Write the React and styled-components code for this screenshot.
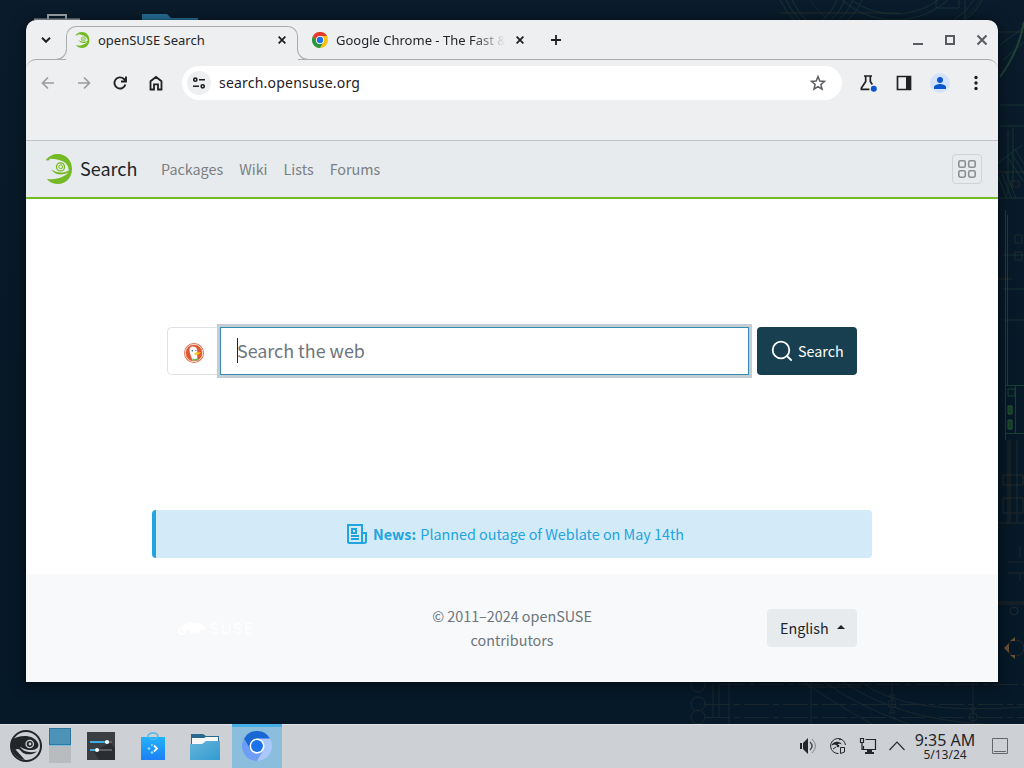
import React from "react";
import styled, { createGlobalStyle } from "styled-components";

const Global = createGlobalStyle`
  *, *::before, *::after { box-sizing: border-box; }
  html, body { margin: 0; padding: 0; overflow: hidden; }
  svg { display: block; flex: none; }
`;

const ui = `"Noto Sans", "Liberation Sans", sans-serif`;
const web = `"Noto Sans CJK SC", "Noto Sans", sans-serif`;

const Desktop = styled.div`
  position: relative;
  width: 1024px;
  height: 768px;
  overflow: hidden;
  background: linear-gradient(180deg, #0a1c2c 0%, #071927 50%, #061929 100%);
  font-family: ${ui};
  color: #232629;
  display: flex;
  flex-direction: column;
  justify-content: flex-end;
`;
const Wallpaper = styled.svg`
  position: absolute;
  inset: 0;
`;
const Window = styled.div`
  position: absolute;
  left: 26px;
  top: 20px;
  width: 972px;
  height: 662px;
  display: flex;
  flex-direction: column;
  background: #eeeff1;
  border-radius: 10px 10px 0 0;
  box-shadow: 0 2px 14px 3px rgba(0, 0, 0, 0.42), 0 0 1px #000;
  overflow: hidden;
`;

/* Tab strip */
const TabStrip = styled.div`
  height: 39px;
  flex: none;
  display: flex;
  align-items: flex-end;
  position: relative;
  z-index: 1;
`;
const StripButton = styled.div`
  width: ${(p) => p.$w}px;
  height: 39px;
  display: flex;
  align-items: center;
  justify-content: center;
`;
const Tab = styled.div`
  position: relative;
  width: ${(p) => p.$w}px;
  height: 33px;
  padding: ${(p) => p.$pad};
  display: flex;
  align-items: center;
  font-size: 13px;
  line-height: 28px;
  padding-bottom: 5px;
`;
const ActiveTab = styled(Tab)`
  &::before {
    content: "";
    position: absolute;
    inset: 0 0 9px 0;
    border: 1px solid #a9abaf;
    border-bottom: 0;
    border-radius: 10px 10px 0 0;
  }
  &::after {
    content: "";
    position: absolute;
    left: 0;
    right: 0;
    bottom: -1px;
    height: 1px;
    background: #eeeff1;
  }
`;
const Flare = styled.i`
  position: absolute;
  z-index: 1;
  bottom: -1px;
  width: 11px;
  height: 11px;
  background: #eeeff1;
  border-bottom: 1px solid #a9abaf;
  ${(p) =>
    p.$right
      ? `right: -10px; border-left: 1px solid #a9abaf; border-bottom-left-radius: 11px;`
      : `left: -10px; border-right: 1px solid #a9abaf; border-bottom-right-radius: 11px;`}
`;
const TabTitle = styled.span`
  flex: 1;
  margin-left: 8px;
  white-space: nowrap;
  ${(p) => p.$fade && `mask-image: linear-gradient(90deg, #000 80%, transparent 99%);`}
`;
const TitleGap = styled.span`
  width: 12px;
`;
const WindowButtons = styled.div`
  margin-left: auto;
  height: 39px;
  display: flex;
  align-items: center;
  gap: 20px;
  padding: 1px 10px 0 0;
`;

/* Toolbar */
const Toolbar = styled.div`
  height: 82px;
  flex: none;
  border-top: 1px solid #a9abaf;
  border-bottom: 1px solid #c1c3c6;
  border-radius: 10px 10px 0 0;
  display: flex;
  align-items: flex-start;
  padding: 6px 10px 0 10px;
`;
const ToolIcons = styled.div`
  display: flex;
  align-items: center;
  gap: 12px;
  height: 34px;
`;
const ToolIcon = styled.div`
  width: 24px;
  height: 34px;
  display: flex;
  align-items: center;
  justify-content: center;
`;
const AddressBar = styled.div`
  width: 660px;
  height: 34px;
  margin: 0 14px 0 14px;
  border-radius: 17px;
  background: #fff;
  display: flex;
  align-items: center;
  padding: 0 14px 0 5px;
  font-size: 14px;
  line-height: 34px;
  letter-spacing: 0.21px;
  color: #1f2023;
`;
const SiteChip = styled.span`
  width: 24px;
  height: 24px;
  border-radius: 50%;
  background: #eeeff1;
  display: flex;
  align-items: center;
  justify-content: center;
  margin-right: 8px;
`;
const Url = styled.span`
  flex: 1;
`;
const Avatar = styled.span`
  width: 20px;
  height: 20px;
  border-radius: 50%;
  background: #d3e3fd;
`;

/* Web page */
const Navbar = styled.nav`
  height: 58px;
  flex: none;
  background: #e7ebee;
  border-bottom: 2px solid #73ba25;
  display: flex;
  align-items: center;
  padding: 0 16px 0 20px;
  font-family: ${web};
`;
const Brand = styled.span`
  font-size: 18px;
  line-height: 30px;
  color: #212529;
  margin: -2px 24px 0 8px;
  width: 57px;
  white-space: nowrap;
`;
const NavLinks = styled.div`
  display: flex;
  gap: 16px;
  flex: 1;
  font-size: 14.35px;
  line-height: 24px;
  color: #7b7f83;
`;
const GridButton = styled.div`
  width: 30px;
  height: 30px;
  border: 1px solid #cfd3d6;
  border-radius: 4px;
  display: flex;
  align-items: center;
  justify-content: center;
`;
const Main = styled.main`
  height: 375px;
  flex: none;
  background: #fff;
  display: flex;
  flex-direction: column;
  justify-content: space-between;
  padding: 128px 126px 16px;
  font-family: ${web};
`;
const SearchForm = styled.div`
  display: flex;
  margin: 0 15px;
  height: 48px;
`;
const Engine = styled.div`
  width: 53px;
  border: 1px solid #dee2e6;
  border-right: 0;
  border-radius: 5px 0 0 5px;
  display: flex;
  align-items: center;
  justify-content: center;
  padding-top: 4px;
`;
const Field = styled.div`
  width: 529px;
  border: 1px solid #358cb2;
  box-shadow: 0 0 0 3px #c3cdd3;
  display: flex;
  align-items: center;
  padding: 0 0 2px 16px;
  font-size: 17.9px;
  line-height: 30px;
  color: #6c757d;
`;
const Caret = styled.i`
  width: 1px;
  height: 25px;
  background: #212529;
  margin-right: -1px;
`;
const SubmitButton = styled.div`
  width: 100px;
  margin-left: 8px;
  border-radius: 4px;
  background: #173f4f;
  color: #fff;
  display: flex;
  align-items: center;
  padding: 0 0 1px 14px;
  gap: 5px;
  font-size: 14.35px;
  line-height: 23px;
`;
const News = styled.div`
  height: 48px;
  border-left: 4px solid #21a4df;
  border-radius: 4px;
  background: #d3ebf9;
  color: #21a4df;
  display: flex;
  align-items: center;
  justify-content: center;
  padding-left: 3px;
  font-size: 14.35px;
  line-height: 24px;
  white-space: pre;
  b { font-weight: 700; margin: 0 1px 0 6px; }
`;
const Footer = styled.footer`
  flex: 1;
  background: #f8f9fb;
  display: flex;
  align-items: center;
  justify-content: space-between;
  padding: 0 141px 0 151px;
  font-family: ${web};
  font-size: 14.35px;
`;
const SuseBrand = styled.div`
  width: 90px;
  display: flex;
  align-items: center;
  gap: 4px;
  padding: 2px 0 0 1px;
  color: #fff;
  font-family: Inter, sans-serif;
  font-size: 14.5px;
  line-height: 16px;
  letter-spacing: 1.5px;
`;
const Copyright = styled.p`
  margin: 0 10px 0 0;
  width: 190px;
  text-align: center;
  line-height: 24px;
  color: #6c757d;
`;
const Language = styled.div`
  width: 90px;
  height: 38px;
  border-radius: 4px;
  background: #e7ebee;
  color: #212529;
  display: flex;
  align-items: center;
  gap: 8px;
  line-height: 22px;
  padding: 0 0 0 13px;
  svg { margin-top: -2px; }
`;

/* Taskbar */
const Taskbar = styled.div`
  position: relative;
  height: 44px;
  background: #cdd0d4;
  border-top: 1px solid #e0e2e4;
  display: flex;
  align-items: center;
`;
const TaskItem = styled.div`
  width: ${(p) => p.$w}px;
  height: 44px;
  display: flex;
  align-items: center;
  justify-content: center;
  margin-top: -1px;
  ${(p) => p.$active && `background: #8bbddc; border-top: 3px solid #46aee8; padding-bottom: 3px;`}
`;
const Pager = styled.div`
  width: 22px;
  height: 36px;
  display: grid;
  grid-template-rows: 17px 17px;
  gap: 1px;
  margin: -1px 3px 0 -3px;
`;
const PagerCell = styled.div`
  background: ${(p) => (p.$current ? "#4d93b8" : "#b9bcbe")};
  border: ${(p) => (p.$current ? "1px solid #2c789f" : "0")};
  box-shadow: ${(p) => (p.$current ? "0 1px 0 #7cbfe5" : "none")};
`;
const Tray = styled.div`
  margin-left: auto;
  display: flex;
  align-items: center;
  gap: 11px;
  padding: 0 16px 2px 0;
`;
const Clock = styled.div`
  width: 66px;
  margin: 1px 3px 0 -5px;
  text-align: center;
  font-size: 16px;
  line-height: 17px;
  white-space: nowrap;
  small { display: block; font-size: 12px; line-height: 12px; }
`;

const Geeko = ({ w, h }) => (
  <svg width={w} height={h} viewBox="0 0 26 30">
    <path fill="#73ba25" d="M0 5.500C3 2 7 0 12 0c8 0 14 6.500 14 15s-6 15-14 15C7.500 30 3.500 28.500.8 25c4 .5 8 .3 11.500-.7 5-1.300 9-3.800 10.300-6.800.6-4.500-1.700-8.200-6-10.200C12.500 5.400 7.500 4.300 3.300 4.800l.5 1.700-2-.6L1 7z" />
    <circle cx="14.500" cy="12.900" r="4" fill="#e7f0da" stroke="#73ba25" strokeWidth="1.300" />
    <circle cx="14.700" cy="12.700" r="1.900" fill="none" stroke="#73ba25" strokeWidth="1" />
    <path fill="#73ba25" d="M5.300 15.200c3 5.800 11.500 7.300 18 2.600v-1.300c-6 3-12.500 2.700-18-1.300z" />
  </svg>
);
const ChromeLogo = () => (
  <svg width="16" height="16" viewBox="0 0 48 48">
    <circle cx="24" cy="24" r="24" fill="#fbc116" />
    <path d="M24 12h20.800A24 24 0 0 0 3.200 12l10.400 18z" fill="#e33b2e" />
    <path d="M3.200 12 13.600 30A12 12 0 0 0 34.400 30L24 48A24 24 0 0 1 3.200 12z" fill="#279847" />
    <circle cx="24" cy="24" r="12" fill="#fff" />
    <circle cx="24" cy="24" r="9.500" fill="#1a73e8" />
  </svg>
);
const Close = ({ size = 8, color = "#202124", sw = 1.8 }) => (
  <svg width={size} height={size} viewBox="0 0 8 8">
    <path d="m.6.600 6.800 6.800m0-6.800L.6 7.400" stroke={color} strokeWidth={sw} />
  </svg>
);
const Line = ({ w = 16, h = w, vb = "0 0 16 16", color = "#202124", sw = 1.7, children }) => (
  <svg width={w} height={h} viewBox={vb} fill="none" stroke={color} strokeWidth={sw}>
    {children}
  </svg>
);

const DesktopArt = () => (
  <Wallpaper width="1024" height="768" viewBox="0 0 1024 768" fill="none">
    <path d="M34 19.500H80M48 21v-6h18v6" stroke="#a5aaae" strokeWidth="2" />
    <path d="M142 20v-6h25l4 4h27v3h-56z" fill="#26739b" />
    <g stroke="#26563d" strokeWidth="1" opacity=".42">
      <circle cx="895" cy="-60" r="74" />
      <circle cx="895" cy="-60" r="80" />
      <circle cx="895" cy="-60" r="104" opacity=".5" />
      <path d="M780 0q6 12 14 20M786 0q6 12 14 20M792 0q6 12 14 20M837 0q-5 12-14 20M845 0q-5 12-14 20M853 0q-5 12-14 20M862 0q-5 12-14 20M936 0v8h23V0M974 0q-8 12-20 20M982 0q-6 12-18 20M965 0v20M1000 45l24-18M1003 60l21-18M1000 105h24M1000 126h24M998 163l24-18M1007 156l16 25M1011 152l13 22M1015 149l9 15M998 176l9 23M1002 174l10 25M1006 172l10 27M1000 198h24M1008 130v65M1013 128v58" />
      <path d="M1024 22Q1019 51 1000 77" stroke="#3c7a43" strokeWidth="2" />
      <path d="M1003 255h21M1003 289h21M1003 320h21" />
    </g>
    <g stroke="#1e5238" opacity=".75">
      <path d="M1005.500 210v230M1007.500 215v170M1015.500 385v48M1006 385.500h18M1006 433.500h18" />
      <path d="M1008 389h7v7h-7z" />
      <path d="M1008 406h4v8h-4zM1008 420h4v9h-4z" stroke="#2f6e38" fill="#1c4a2e" />
    </g>
    <g stroke="#71502f" opacity=".28">
      <path d="M780 13h120M998 32h26M998 172h26M1011 181h8v6h-8zM998 279h14M1015 235h7v8h-7zM1015 252h7v8h-7zM1008 440v83M1010 440v83M1017 440v82M998 523h26M1003 475h20v10h-20zM1003 498h20v15h-20z" />
      <path d="M998 602h26M998 604h26M1008 562h16M1008 573h16M1020 574v7M1020 546v12" />
      <circle cx="1014" cy="611" r="4" />
      <circle cx="1016" cy="648" r="8" />
    </g>
    <path d="m1004 648 5-5v10zM1010 641l5-4v4zM1010 655l5 4v-4z" fill="#6a5136" />
    <g stroke="#5b543b" opacity=".24">
      <circle cx="698" cy="685" r="7" />
      <circle cx="698" cy="704" r="7" />
      <circle cx="698" cy="717" r="7" />
      <path d="M705 704.500h319M705 717.500h319M720 684.500h304" strokeDasharray="25 4 6 4" />
      <path d="M713 684v34M719 684v34M729 682v42M811 682v42M892 682v22M973 682v42M804 682q28 20 68 42M824 682q35 25 85 42M843 682q55 37 140 42M861 682q44 34 163 25M808 687h53" />
      <circle cx="892" cy="704" r="4" />
      <circle cx="973" cy="717" r="4" />
      <path d="m889 695 3 4 3-4zm0 18 3-4 3 4zm81-5 3 4 3-4z" />
    </g>
  </Wallpaper>
);

const Duck = () => (
  <svg width="20" height="20" viewBox="0 0 20 20">
    <circle cx="10" cy="10" r="10" fill="#de6a4b" />
    <circle cx="10" cy="10" r="8.700" fill="#de5833" stroke="#fff" strokeWidth=".8" />
    <path d="M8.300 17.500C7.600 13.500 5.500 10 5.500 7.200c0-2.200 1-3.700 3.300-3.700 3 0 4.500 1.800 4.500 4.500 0 2-.5 3 .4 9z" fill="#fff" />
    <path d="M10.500 10c2-.8 4.300-.6 6.500-.8-1 1.900-3.500 2.300-6.200 3z" fill="#fdc70a" />
    <path d="m8.300 15.200 2.500 1 3.400-1.200v2.700l-3-.8-2.700 1z" fill="#65bc46" />
    <circle cx="8.300" cy="7.800" r=".7" fill="#2d4f8e" />
    <circle cx="12" cy="7.500" r=".6" fill="#2d4f8e" />
  </svg>
);

const BrowserTabs = () => (
  <TabStrip>
    <StripButton $w={40}>
      <Line w={10} h={6} vb="0 0 10 6" sw={2}><path d="m1 .8 4 4 4-4" /></Line>
    </StripButton>
    <ActiveTab $w={232} $pad="0 12px 0 9px">
      <Flare />
      <Flare $right />
      <Geeko w={15} h={16} />
      <TabTitle>openSUSE Search</TabTitle>
      <Close />
    </ActiveTab>
    <Tab $w={230} $pad="0 4px 0 14px">
      <ChromeLogo />
      <TabTitle $fade>Google Chrome - The Fast &amp;</TabTitle>
      <TitleGap />
      <Close />
    </Tab>
    <StripButton $w={56}>
      <Line w={10} vb="0 0 10 10" sw={1.8}><path d="M0 5h10M5 0v10" /></Line>
    </StripButton>
    <WindowButtons>
      <Line w={12} color="#5a5c61" sw={2} vb="0 0 12 12"><path d="M1 10h10" /></Line>
      <Line w={12} color="#5a5c61" sw={2} vb="0 0 12 12"><path d="M2 2h8v8H2z" /></Line>
      <Line w={12} color="#5a5c61" sw={2} vb="0 0 12 12"><path d="m1.500 1.500 9 9m0-9-9 9" /></Line>
    </WindowButtons>
  </TabStrip>
);

const BrowserToolbar = () => (
  <Toolbar>
    <ToolIcons>
      <ToolIcon><Line color="#9b9ca0"><path d="M14 8H3M8 2.500 2.500 8 8 13.500" /></Line></ToolIcon>
      <ToolIcon><Line color="#9b9ca0"><path d="M2 8h11M8 2.500 13.500 8 8 13.500" /></Line></ToolIcon>
      <ToolIcon><Line sw={1.9}><path d="M13.400 9.500A5.600 5.600 0 1 1 12 4l1.600 1.700M14 1.500v5H9" /></Line></ToolIcon>
      <ToolIcon><Line sw={1.8}><path d="M2.500 14.500v-8.200L8 2l5.500 4.300v8.200H10V9.300H6v5.200z" /></Line></ToolIcon>
    </ToolIcons>
    <AddressBar>
      <SiteChip>
        <Line w={14} vb="0 0 14 14" sw={1.6}>
          <circle cx="3.300" cy="3.700" r="1.600" /><path d="M7 3.700h6M1 10.300h6" /><circle cx="10.700" cy="10.300" r="1.600" />
        </Line>
      </SiteChip>
      <Url>search.opensuse.org</Url>
      <Line w={20} vb="0 0 20 20" color="#5b5d60" sw={1.5}>
        <path d="m10 3.500 1.800 4.500 4.700.4-3.600 3.100 1.100 4.700-4-2.500-4 2.500 1.100-4.700-3.600-3.100 4.700-.4z" />
      </Line>
    </AddressBar>
    <ToolIcons>
      <ToolIcon>
        <Line w={18} vb="0 0 18 18">
          <path d="M5 2h8M6.700 2v5.500L2.400 14v1.300h8M11.300 2v5.500l2 3" />
          <circle cx="14.800" cy="14.800" r="3" fill="#0b57d0" stroke="none" />
        </Line>
      </ToolIcon>
      <ToolIcon>
        <Line><path d="M1.500 1.500h13v13h-13z" /><path d="M10 1h5v14h-5z" fill="#202124" stroke="none" /></Line>
      </ToolIcon>
      <ToolIcon>
        <Avatar>
          <svg width="20" height="20" viewBox="0 0 20 20" fill="#0b57d0">
            <circle cx="10" cy="7" r="3" /><path d="M4 16v-2c0-2 4-3 6-3s6 1 6 3v2z" />
          </svg>
        </Avatar>
      </ToolIcon>
      <ToolIcon>
        <svg width="4" height="16" viewBox="0 0 4 16" fill="#202124">
          <circle cx="2" cy="2.500" r="1.700" /><circle cx="2" cy="8" r="1.700" /><circle cx="2" cy="13.500" r="1.700" />
        </svg>
      </ToolIcon>
    </ToolIcons>
  </Toolbar>
);

const Page = () => (
  <>
    <Navbar>
      <Geeko w={26} h={30} />
      <Brand>Search</Brand>
      <NavLinks>
        {["Packages", "Wiki", "Lists", "Forums"].map((t) => <span key={t}>{t}</span>)}
      </NavLinks>
      <GridButton>
        <Line w={20} vb="0 0 20 20" color="#8b8f92" sw={1.6}>
          {[1.8, 11.700].map((x) => [1.8, 11.700].map((y) => (
            <rect key={`${x}-${y}`} x={x} y={y} width="6.500" height="6.500" rx="1.600" />
          )))}
        </Line>
      </GridButton>
    </Navbar>
    <Main>
      <SearchForm>
        <Engine><Duck /></Engine>
        <Field><Caret />Search the web</Field>
        <SubmitButton>
          <Line w={22} vb="0 0 22 22" color="#fff" sw={1.8}>
            <circle cx="10" cy="10" r="8.300" /><path d="m16 16 4.700 4.700" />
          </Line>
          Search
        </SubmitButton>
      </SearchForm>
      <News>
        <Line w={20} vb="0 0 20 20" color="#21a4df" sw={2}>
          <path d="M1 1h14v18H2.500Q1 19 1 17.500zM15 9h4v8.500q0 1.500-2 1.500t-2-1.500M4 12h8M4 15h8" />
          <path d="M5 5h4v4H5z" />
        </Line>
        <b>News:</b> Planned outage of Weblate on May 14th
      </News>
    </Main>
    <Footer>
      <SuseBrand>
        <svg width="28" height="14" viewBox="0 0 28 14">
          <path d="M4 5c2-4 7-6 11-4 2 1 4 1 5 0l4 1 3 4-1 2h-5l1 3h-3l-2-2-2 2h-3l-1-3-4 1z" fill="#fff" />
          <path d="M5 5C1 5 0 8 1 10s5 3 6 1-2-4-3-2" fill="none" stroke="#fff" strokeWidth="1.700" />
        </svg>
        SUSE
      </SuseBrand>
      <Copyright>© 2011–2024 openSUSE<br />contributors</Copyright>
      <Language>
        English
        <svg width="8" height="4" viewBox="0 0 8 4"><path d="M0 4 4 0l4 4z" fill="#212529" /></svg>
      </Language>
    </Footer>
  </>
);

const Panel = () => (
  <Taskbar>
    <TaskItem $w={52}>
      <svg width="32" height="32" viewBox="0 0 32 32">
        <circle cx="16" cy="16" r="15" fill="#cdd0d4" stroke="#232629" strokeWidth="2" />
        <path d="M1.500 10C8 5.500 17 5 23 8c3.500 1.500 5.500 5 5.500 7.500-1 4-5 5-9.500 4.500-4-.4-7-1.500-9-3.500 2 4.500 9 7 17 5-5 4-13 3.500-15.500 0C9.500 18.500 7 18.500 5.500 19.500L15 30C5 29 0 20 1.500 10z" fill="#232629" />
        <circle cx="19.700" cy="14" r="3.700" fill="#232629" stroke="#cdd0d4" strokeWidth="1.300" />
        <circle cx="20" cy="14" r="1.400" fill="#cdd0d4" />
      </svg>
    </TaskItem>
    <Pager><PagerCell $current /><PagerCell /></Pager>
    <TaskItem $w={54}>
      <svg width="28" height="28" viewBox="0 0 28 28">
        <path d="M0 0h28v28H0z" fill="#3b3e42" /><path d="m23 11 5 5v12H12l-5-9z" fill="#2a2d31" />
        <path d="M3 10h22M3 18h22" stroke="#5c6064" strokeWidth="2" />
        <path d="M3 10h16M3 18h6" stroke="#3daee9" strokeWidth="2" />
        <circle cx="20" cy="10" r="2.100" fill="#fff" /><circle cx="10" cy="18" r="2.100" fill="#fff" />
      </svg>
    </TaskItem>
    <TaskItem $w={50}>
      <svg width="24" height="28" viewBox="0 0 24 28">
        <defs><linearGradient id="bag" x2="0" y2="1"><stop stopColor="#22b2fb" /><stop offset="1" stopColor="#1d7ff3" /></linearGradient></defs>
        <path d="M7 9V5q0-4 5-4t5 4v4" fill="none" stroke="#55b7e8" strokeWidth="1.500" />
        <path d="M0 5h24v23H0z" fill="url(#bag)" /><path d="M7 5q5 5 10 0" fill="none" stroke="#53bff0" />
        <path d="m13 13.500 3 3-3 3" fill="none" stroke="#fff" strokeWidth="1.800" />
        <g fill="#95dcff"><circle cx="11" cy="13" r="1" /><circle cx="8" cy="16.500" r="1.300" /><circle cx="11" cy="20.500" r="1.300" /></g>
      </svg>
    </TaskItem>
    <TaskItem $w={54}>
      <svg width="30" height="27" viewBox="0 0 30 27">
        <defs><linearGradient id="folder" x2="1" y2="1"><stop stopColor="#67b5da" /><stop offset="1" stopColor="#329bd0" /></linearGradient></defs>
        <path d="M1 1h12l3 2h13v14H1z" fill="#28698c" /><path d="M2 5h12l2-1h12v10H2z" fill="#f6f7f7" />
        <path d="M0 11h12l4-3h14v19H0z" fill="url(#folder)" />
      </svg>
    </TaskItem>
    <TaskItem $w={50} $active>
      <svg width="30" height="30" viewBox="0 0 48 48">
        <circle cx="24" cy="24" r="24" fill="#aac8fb" />
        <path d="M3.200 12 13.600 30A12 12 0 0 0 34.400 30L24 48A24 24 0 0 1 3.200 12z" fill="#6e9df5" />
        <path d="M24 12h20.800A24 24 0 0 0 3.200 12l10.400 18z" fill="#1967d2" />
        <circle cx="24" cy="24" r="12" fill="#fff" /><circle cx="24" cy="24" r="9.500" fill="#1a73e8" />
      </svg>
    </TaskItem>
    <Tray>
      <Line w={18} vb="0 0 18 18" color="#83878a" sw={1}>
        <path d="M1 6h2v6H1zM4 6l5-5v16l-5-5z" fill="#232629" stroke="none" />
        <path d="M11 5q4 4 0 8" stroke="#4a4e51" strokeWidth="1.500" /><path d="M13 2q7 7 0 14" />
      </Line>
      <Line w={20} vb="0 0 20 20" color="#232629" sw={1}>
        <path d="M10.500 17.500A7.500 7.500 0 1 1 17.500 9" />
        <path d="M3.500 10q1-4.500 6.500-4.200 3 .5 4 2.700-2-1.200-4-.5l-.5 2.500q-1-2-3-2t-3 1.500z" fill="#232629" stroke="none" />
        <circle cx="10" cy="10" r="1.300" fill="#232629" stroke="none" />
        <path d="M5 13l3-2M11 4l2-1M12.500 11.500h4V16l-4 1.500z" />
      </Line>
      <Line w={18} vb="0 0 18 18" color="#232629" sw={1.200}>
        <path d="M6.500 2.500h10v10H4.500V9M1.500 1.500h3v4h-3zM3 6v6.500h3" /><path d="M8 13h5v2h2v2H6v-2h2z" fill="#232629" stroke="none" />
      </Line>
      <Line w={18} vb="0 0 18 18" color="#232629" sw={1.100}><path d="m1.500 13 7.500-8 7.500 8" /></Line>
      <Clock>9:35 AM<small>5/13/24</small></Clock>
      <Line w={16} vb="0 0 16 16" color="#63666a" sw={1}><path d="M.5.500h15v15H.5zM2 13.500h12" /></Line>
    </Tray>
  </Taskbar>
);

export default function App() {
  return (
    <>
      <Global />
      <Desktop>
        <DesktopArt />
        <Window>
          <BrowserTabs />
          <BrowserToolbar />
          <Page />
        </Window>
        <Panel />
      </Desktop>
    </>
  );
}
